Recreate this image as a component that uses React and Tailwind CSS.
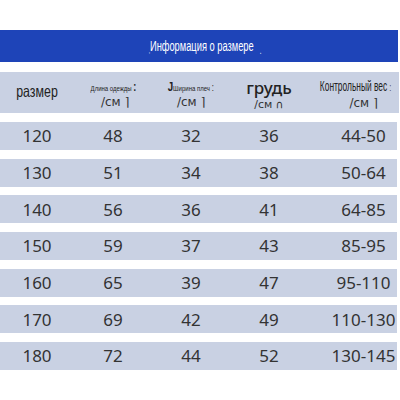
import React from "react";

const rows = [
  ["120", "48", "32", "36", "44-50"],
  ["130", "51", "34", "38", "50-64"],
  ["140", "56", "36", "41", "64-85"],
  ["150", "59", "37", "43", "85-95"],
  ["160", "65", "39", "47", "95-110"],
  ["170", "69", "42", "49", "110-130"],
  ["180", "72", "44", "52", "130-145"],
];

const narrow = { fontFamily: '"Liberation Sans", Arial, sans-serif' };
const wide = { fontFamily: '"DejaVu Sans", sans-serif' };

export default function App() {
  return (
    <div className="w-[400px] h-[400px] bg-white overflow-hidden pt-[30px]">
      <div className="w-[398px] h-[32px] bg-[#1e44b8] flex items-center justify-center">
        <span className="text-white text-[15.5px] scale-x-[0.6] whitespace-nowrap ml-[12px]" style={narrow}>
          <span className="text-[8px] align-bottom">,</span>Информация о размере <span className="text-[10px] ml-[6px] align-bottom">.</span>
        </span>
      </div>

      <div className="mt-[10px] w-[399px] h-[41px] bg-[#c9d1e3] grid grid-cols-[74px_78px_78px_78px_minmax(0,1fr)] items-center text-[#222]">
        <div className="text-center text-[16.5px] scale-x-[0.75] pb-[2px]" style={narrow}>размер</div>
        <div className="flex flex-col items-center leading-none pt-[3px]">
          <span className="text-[8px] scale-x-[0.75] whitespace-nowrap" style={narrow}>
            Длина одежды <b className="text-[12px]">:</b>
          </span>
          <span className="text-[12px] text-[#333] mt-[3px] ml-[4px]" style={wide}>/см ⌉</span>
        </div>
        <div className="flex flex-col items-center leading-none pt-[3px]">
          <span className="text-[8px] scale-x-[0.75] whitespace-nowrap" style={narrow}>
            <b className="text-[13px]">J</b>Ширина плеч <span className="text-[10px]">:</span>
          </span>
          <span className="text-[12px] text-[#333] mt-[3px]" style={wide}>/см ⌉</span>
        </div>
        <div className="flex flex-col items-center leading-none pt-[3px]">
          <span className="text-[17px] font-medium text-[#222]" style={{ fontFamily: '"Noto Sans", sans-serif' }}>грудь</span>
          <span className="text-[11px] text-[#333] mt-[3px]" style={wide}>/см ∩</span>
        </div>
        <div className="flex flex-col items-center leading-none pt-[3px] pl-[4px]">
          <span className="text-[14px] scale-x-[0.6] whitespace-nowrap" style={narrow}>
            Контрольный вес <span className="text-[10px]">:</span>
          </span>
          <span className="text-[12px] text-[#333] mt-[4px] ml-[16px]" style={wide}>/см ⌉</span>
        </div>
      </div>

      <div className="mt-[9px] flex flex-col gap-[8.7px]">
        {rows.map((r) => (
          <div
            key={r[0]}
            className="w-[397px] h-[28px] bg-[#c9d1e3] grid grid-cols-[74px_78px_78px_78px_minmax(0,1fr)] items-center text-[17px] text-[#333]"
            style={{ fontFamily: '"Noto Sans", sans-serif' }}
          >
            {r.map((c, i) => (
              <div key={i} className={i === 4 ? "text-center pl-[22px]" : "text-center"}>
                {c}
              </div>
            ))}
          </div>
        ))}
      </div>
    </div>
  );
}
